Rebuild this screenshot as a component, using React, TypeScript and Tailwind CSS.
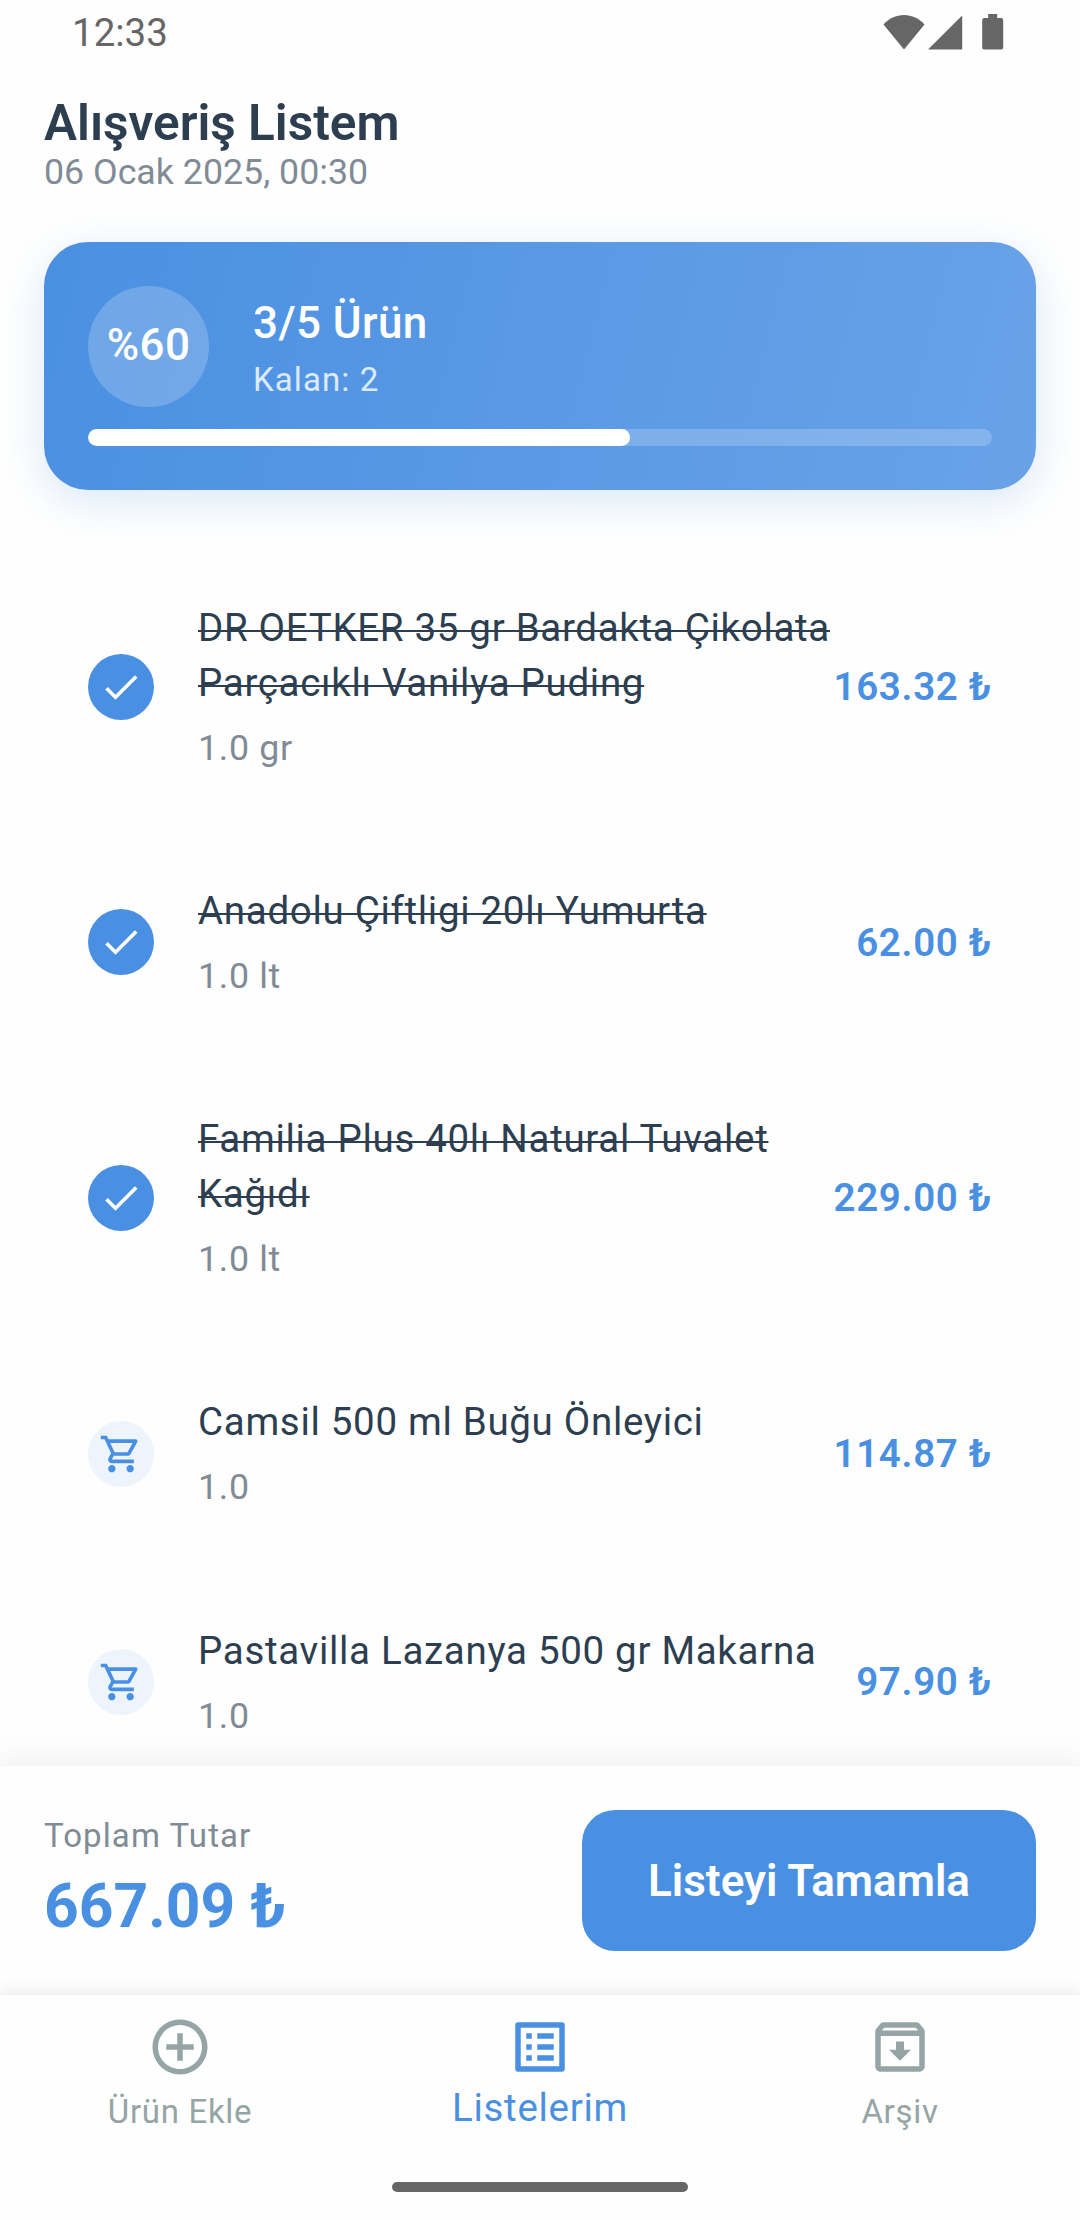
import React from "react";
import {
  MdAddCircleOutline,
  MdCheck,
  MdListAlt,
  MdOutlineArchive,
  MdOutlineShoppingCart,
} from "react-icons/md";

type Item = { name: string; amount: string; price: string; done: boolean };

const items: Item[] = [
  { name: "DR OETKER 35 gr Bardakta Çikolata Parçacıklı Vanilya Puding", amount: "1.0 gr", price: "163.32 ₺", done: true },
  { name: "Anadolu Çiftligi 20lı Yumurta", amount: "1.0 lt", price: "62.00 ₺", done: true },
  { name: "Familia Plus 40lı Natural Tuvalet Kağıdı", amount: "1.0 lt", price: "229.00 ₺", done: true },
  { name: "Camsil 500 ml Buğu Önleyici", amount: "1.0", price: "114.87 ₺", done: false },
  { name: "Pastavilla Lazanya 500 gr Makarna", amount: "1.0", price: "97.90 ₺", done: false },
];

function StatusBar() {
  return (
    <div className="flex h-16 shrink-0 items-center justify-between pr-[76px] pl-[72px] text-[#666666]">
      <span className="pt-0.5 text-[38.5px] leading-[64px]">12:33</span>
      <div className="flex items-center">
        <svg className="h-[36px] w-[42px]" viewBox="0 0 42 36" fill="currentColor">
          <path d="M21 35.5 0.5 10.5C6 4.5 13 1 21 1s15 3.500 20.500 9.500z" />
        </svg>
        <svg className="ml-[3px] h-[36px] w-[35px]" viewBox="0 0 35 36" fill="currentColor">
          <path d="M0 35.600 34.200 1.400v34.200z" />
        </svg>
        <svg className="ml-[19px] h-[36px] w-[22px]" viewBox="0 0 22 36" fill="currentColor">
          <path d="M6.200 0h9v4H19a2.200 2.200 0 0 1 2.200 2.200v27.200a2.200 2.200 0 0 1-2.200 2.200H2.400a2.200 2.200 0 0 1-2.200-2.200V6.200A2.200 2.200 0 0 1 2.400 4h3.800z" />
        </svg>
      </div>
    </div>
  );
}

function ProgressCard() {
  return (
    <section className="mx-11 mt-[50px] h-[247.5px] shrink-0 rounded-[44px] bg-[linear-gradient(104deg,#4a90e2,#69a2e7)] px-11 pt-11 shadow-[0_11px_41px_rgba(74,144,226,0.2)]">
      <div className="flex items-center">
        <div className="flex size-[121px] items-center justify-center rounded-full bg-white/20">
          <span className="pb-1 text-[44px] leading-[52px] font-medium tracking-[0.41px] text-white">%60</span>
        </div>
        <div className="ml-11 flex flex-col">
          <span className="text-[44px] leading-[66px] font-medium tracking-[0.41px] text-white">3/5 Ürün</span>
          <span className="text-[33px] leading-[47px] tracking-[1.1px] text-white/80">Kalan: 2</span>
        </div>
      </div>
      <div className="mt-[22px] h-[16.5px] overflow-hidden rounded-[8.25px] bg-white/20">
        <div className="h-full w-[60%] rounded-[8.25px] bg-white" />
      </div>
    </section>
  );
}

function ListRow({ item }: { item: Item }) {
  return (
    <li className="flex items-center py-[55px]">
      <div
        className={
          item.done
            ? "flex size-[66px] shrink-0 items-center justify-center rounded-full bg-[#4a90e2] text-white"
            : "flex size-[66px] shrink-0 items-center justify-center rounded-full bg-[#edf4fc] text-[#4a90e2]"
        }
      >
        {item.done ? <MdCheck className="size-11" /> : <MdOutlineShoppingCart className="size-11" />}
      </div>
      <div className="ml-11 min-w-0 flex-1">
        <p
          className={
            item.done
              ? "text-[38.5px] leading-[55px] tracking-[0.69px] text-[#2c3e50] underline decoration-2 underline-offset-[-11px] [text-decoration-skip-ink:none]"
              : "text-[38.5px] leading-[55px] tracking-[0.69px] text-[#2c3e50]"
          }
        >
          {item.name}
        </p>
        <p className="mt-[13px] text-[35.75px] leading-[50.15px] tracking-[0.69px] text-[#808b96]">{item.amount}</p>
      </div>
      <span className="shrink-0 text-[38.5px] leading-[55px] font-semibold tracking-[0.69px] text-[#4a90e2]">{item.price}</span>
    </li>
  );
}

export default function App() {
  return (
    <div className="flex h-[2220px] w-[1080px] flex-col overflow-hidden bg-[#fefefe] font-['Roboto',sans-serif]">
      <StatusBar />

      <header className="mt-[29px] flex shrink-0 flex-col px-11">
        <h1 className="text-[49.5px] leading-[60px] font-semibold text-[#2c3e50]">Alışveriş Listem</h1>
        <p className="-mt-px text-[35.75px] leading-[40px] text-[#808b96]">06 Ocak 2025, 00:30</p>
      </header>

      <ProgressCard />

      <ul className="mt-[55.5px] min-h-0 flex-1 overflow-hidden px-[88px]">
        {items.map((item) => (
          <ListRow key={item.name} item={item} />
        ))}
      </ul>

      <section className="relative flex h-[229px] shrink-0 items-start justify-between bg-[#fefefe] px-11 pt-11 shadow-[0_-11px_27px_rgba(0,0,0,0.05)]">
        <div className="flex flex-col">
          <span className="mt-0.5 text-[33px] leading-[48px] tracking-[1.1px] text-[#808b96]">Toplam Tutar</span>
          <span className="mt-[8px] text-[60.5px] leading-[77px] font-bold text-[#4a90e2]">667.09 ₺</span>
        </div>
        <button className="h-[140.5px] w-[454px] rounded-[33px] bg-[#4a90e2] pt-px text-[44px] leading-[52px] font-semibold text-white">
          Listeyi Tamamla
        </button>
      </section>

      <nav className="relative flex h-[225px] shrink-0 flex-col items-center bg-[#fefefe] shadow-[0_-3px_16px_rgba(0,0,0,0.08)]">
        <div className="grid w-full grid-cols-3">
          <div className="flex flex-col items-center pt-[19px] text-[#95a5a6]">
            <MdAddCircleOutline className="size-[66px]" />
            <span className="mt-[8px] text-[33px] leading-[47px] tracking-[0.69px]">Ürün Ekle</span>
          </div>
          <div className="flex flex-col items-center pt-[19px] text-[#4a90e2]">
            <MdListAlt className="size-[66px]" />
            <span className="text-[38.5px] leading-[55px] tracking-[0.69px]">Listelerim</span>
          </div>
          <div className="flex flex-col items-center pt-[19px] text-[#95a5a6]">
            <MdOutlineArchive className="size-[66px]" />
            <span className="mt-[8px] text-[33px] leading-[47px] tracking-[0.69px]">Arşiv</span>
          </div>
        </div>
        <div className="mt-auto mb-[28px] h-[10px] w-[296px] rounded-[5px] bg-[#666666]" />
      </nav>
    </div>
  );
}
